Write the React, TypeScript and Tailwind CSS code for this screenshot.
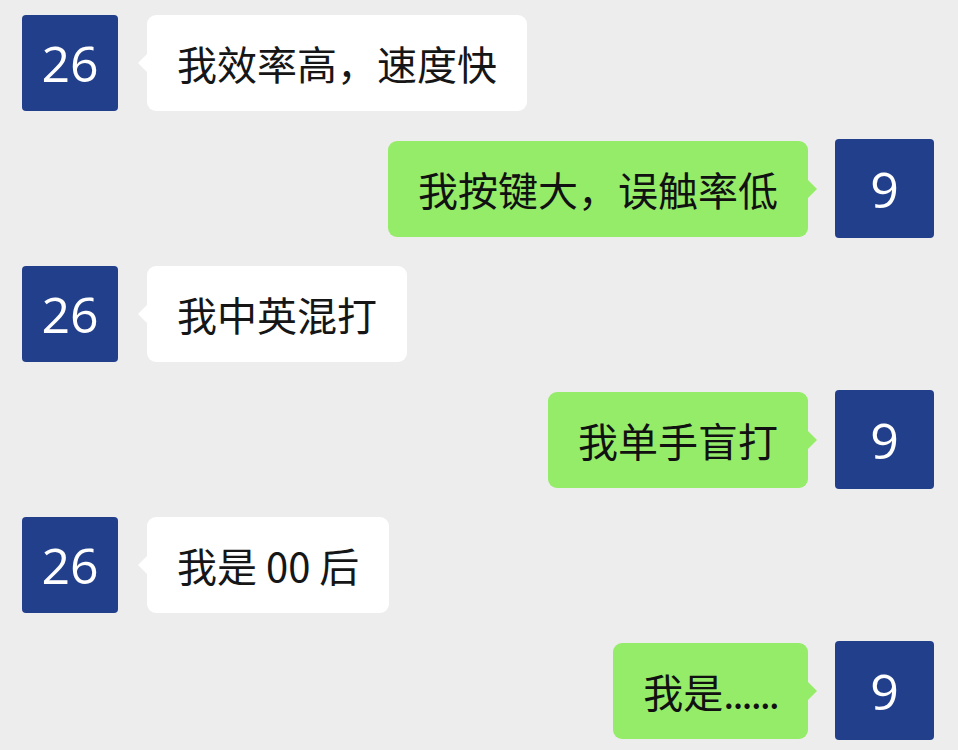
import React from "react";

const font = { fontFamily: '"Noto Sans CJK SC", "Noto Sans", sans-serif' };
const digitFont = { fontFamily: '"Open Sans", "Noto Sans", sans-serif' };

function Left({ children }: { children: React.ReactNode }) {
  return (
    <div className="flex items-center pl-[22px]">
      <div className="w-[96px] h-[96px] rounded-[4px] bg-[#213f8b] flex items-center justify-center text-white text-[50px] font-medium leading-none" style={digitFont}>
        26
      </div>
      <div className="relative ml-[29px] h-[96px] bg-white rounded-[9px] px-[30px] flex items-center text-[40px] text-[#161616]">
        <div className="absolute left-[-9px] top-1/2 -translate-y-1/2 w-0 h-0 border-y-[10px] border-y-transparent border-r-[10px] border-r-white" />
        {children}
      </div>
    </div>
  );
}

function Right({ children }: { children: React.ReactNode }) {
  return (
    <div className="flex items-center justify-end pr-[24px]">
      <div className="relative mr-[27px] h-[96px] bg-[#95ec69] rounded-[9px] px-[30px] flex items-center text-[40px] text-[#111]">
        <div className="absolute right-[-9px] top-1/2 -translate-y-1/2 w-0 h-0 border-y-[10px] border-y-transparent border-l-[10px] border-l-[#95ec69]" />
        {children}
      </div>
      <div className="w-[99px] h-[99px] rounded-[4px] bg-[#213f8b] flex items-center justify-center text-white text-[50px] font-medium leading-none" style={digitFont}>
        9
      </div>
    </div>
  );
}

export default function App() {
  return (
    <div className="w-[958px] h-[750px] bg-[#ededed] overflow-hidden flex flex-col gap-[28px] pt-[15px]" style={font}>
      <Left>我效率高，速度快</Left>
      <Right>我按键大，误触率低</Right>
      <Left>我中英混打</Left>
      <Right>我单手盲打</Right>
      <Left>我是 00 后</Left>
      <Right>
        <span>
          我是<span className="tracking-[-2px]">......</span>
        </span>
      </Right>
    </div>
  );
}
